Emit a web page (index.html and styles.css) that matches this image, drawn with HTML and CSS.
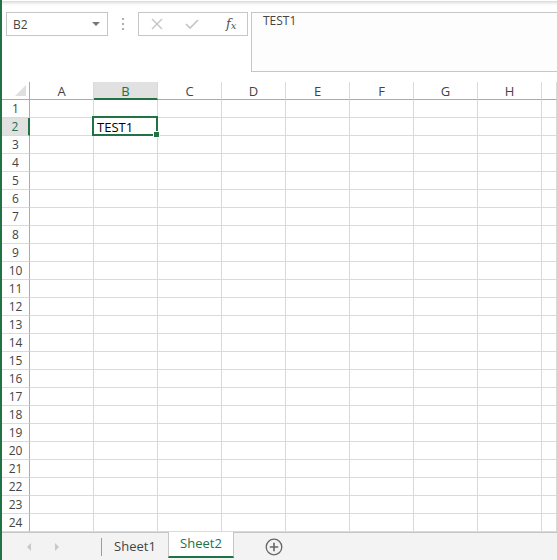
FILE: index.html
```html
<!DOCTYPE html>
<html>
<head>
<meta charset="utf-8">
<link rel="stylesheet" href="styles.css">
</head>
<body>
<div class="app">
  <div class="toolbar">
    <div class="namebox">
      <span class="name">B2</span>
      <span class="caret"></span>
    </div>
    <div class="dots"><i></i><i></i><i></i></div>
    <div class="fbtns">
      <svg class="ico" width="14" height="14" viewBox="0 0 14 14"><path d="M2 2 L12 12 M12 2 L2 12" stroke="#c4c4c4" stroke-width="1.4" fill="none"/></svg>
      <svg class="ico" width="16" height="14" viewBox="0 0 16 14"><path d="M2 7 L6 11 L14 3" stroke="#c4c4c4" stroke-width="1.6" fill="none"/></svg>
      <span class="fx">f<sub>x</sub></span>
    </div>
    <div class="formula">TEST1</div>
  </div>
  <div class="sheet">
    <div class="grid" id="grid"></div>
    <div class="selection"><span class="handle"></span></div>
  </div>
  <div class="tabs">
    <div class="navs">
      <svg width="6" height="8" viewBox="0 0 6 8"><path d="M5 0 L1 4 L5 8 Z" fill="#c8c8c8"/></svg>
      <svg width="6" height="8" viewBox="0 0 6 8"><path d="M1 0 L5 4 L1 8 Z" fill="#c8c8c8"/></svg>
    </div>
    <div class="sep"></div>
    <div class="tab">Sheet1</div>
    <div class="tab active">Sheet2</div>
    <div class="add">
      <svg width="18" height="18" viewBox="0 0 18 18"><circle cx="9" cy="9" r="7.8" stroke="#666" stroke-width="1.3" fill="none"/><path d="M9 4.8 V13.2 M4.8 9 H13.2" stroke="#666" stroke-width="1.6"/></svg>
    </div>
  </div>
</div>
<script src="app.js"></script>
</body>
</html>
```
FILE: app.js
```js
(function(){
  var g = document.getElementById('grid');
  var cols = ['A','B','C','D','E','F','G','H',''];
  var html = '<div class="c corner"><span class="tri"></span></div>';
  cols.forEach(function(c, i){
    html += '<div class="c ch' + (c === 'B' ? ' sel' : '') + '">' + c + '</div>';
  });
  for (var r = 1; r <= 24; r++) {
    html += '<div class="c rh' + (r === 2 ? ' sel' : '') + '">' + r + '</div>';
    for (var k = 0; k < cols.length; k++) {
      var t = (r === 2 && k === 1) ? 'TEST1' : '';
      html += '<div class="c cell">' + t + '</div>';
    }
  }
  g.innerHTML = html;
})();
```
FILE: styles.css
```css
html, body {
  margin: 0;
  padding: 0;
  background: #fff;
}
body {
  font-family: "Open Sans", "Noto Sans", sans-serif;
  color: #444;
  overflow: hidden;
}
.app {
  width: 557px;
  height: 560px;
  border-left: 2px solid #217346;
  box-sizing: border-box;
  display: flex;
  flex-direction: column;
  overflow: hidden;
}
.toolbar {
  height: 82px;
  box-sizing: border-box;
  background: linear-gradient(#ffffff 0px, #ffffff 1px, #d6d6d6 1px, #e4e4e4 2px, #f6f6f6 4px, #ffffff 6px);
  display: flex;
  align-items: flex-start;
  padding-top: 12px;
  padding-left: 4px;
  flex: none;
}
.namebox {
  width: 102px;
  height: 24px;
  box-sizing: border-box;
  border: 1px solid #c6c6c6;
  display: flex;
  align-items: center;
  justify-content: space-between;
  padding: 0 7px 0 6px;
  font-size: 12px;
  color: #444;
}
.caret {
  width: 0;
  height: 0;
  border-left: 4px solid transparent;
  border-right: 4px solid transparent;
  border-top: 4px solid #777;
}
.dots {
  width: 30px;
  height: 24px;
  display: flex;
  flex-direction: column;
  align-items: center;
  justify-content: center;
  gap: 3px;
}
.dots i {
  width: 2px;
  height: 2px;
  background: #b0b0b0;
  display: block;
}
.fbtns {
  width: 110px;
  height: 24px;
  box-sizing: border-box;
  border: 1px solid #c6c6c6;
  display: flex;
  align-items: center;
  padding-left: 11px;
  gap: 20px;
}
.fbtns .ico {
  display: block;
}
.fx {
  font-family: "DejaVu Serif", "Liberation Serif", serif;
  font-style: italic;
  font-size: 13px;
  color: #555;
  margin-left: 6px;
  line-height: 1;
}
.fx sub {
  font-size: 10px;
  vertical-align: -1px;
}
.formula {
  margin-left: 3px;
  flex: 1;
  height: 60px;
  box-sizing: border-box;
  border: 1px solid #c6c6c6;
  border-right: none;
  background: #fdfdfd;
  font-size: 12px;
  color: #444;
  padding: 0 0 0 11px;
  line-height: 16px;
}
.sheet {
  position: relative;
  flex: none;
  height: 450px;
}
.grid {
  display: grid;
  grid-template-columns: 28px repeat(8, 64px) 1fr;
  grid-auto-rows: 18px;
}
.c {
  box-sizing: border-box;
  border-right: 1px solid #d9d9d9;
  border-bottom: 1px solid #dadada;
  font-size: 12px;
  line-height: 17px;
}
.corner {
  background: #fff;
  border-right: 1px solid #ababab;
  border-bottom: 1px solid #ababab;
  position: relative;
}
.tri {
  position: absolute;
  right: 3px;
  bottom: 3px;
  width: 0;
  height: 0;
  border-left: 11px solid transparent;
  border-bottom: 11px solid #dfdfdf;
}
.ch {
  text-align: center;
  font-size: 13px;
  color: #444;
  border-right: 1px solid #dadada;
  border-bottom: 1px solid #ababab;
  line-height: 18px;
}
.ch.sel {
  background: #e1e1e1;
  border-bottom: 2px solid #217346;
  color: #217346;
}
.rh {
  text-align: center;
  color: #444;
  border-right: 1px solid #ababab;
  font-size: 12px;
}
.rh.sel {
  background: #e1e1e1;
  border-right: 2px solid #217346;
  color: #217346;
}
.cell {
  font-family: "Open Sans", "Liberation Sans", sans-serif;
  font-size: 13px;
  color: #000;
  padding-left: 3px;
  line-height: 18px;
}
.selection {
  position: absolute;
  left: 90px;
  top: 34px;
  width: 66px;
  height: 20px;
  box-sizing: border-box;
  border: 2px solid #217346;
}
.handle {
  position: absolute;
  right: -4px;
  bottom: -4px;
  width: 5px;
  height: 5px;
  background: #217346;
  border: 1px solid #fff;
}
.tabs {
  flex: 1;
  background: #f3f3f3;
  border-top: 1px solid #c6c6c6;
  display: flex;
  align-items: stretch;
  font-size: 13px;
}
.navs {
  width: 70px;
  display: flex;
  align-items: center;
  justify-content: flex-start;
  gap: 22px;
  padding-left: 24px;
  box-sizing: border-box;
}
.sep {
  width: 1px;
  background: #9c9c9c;
  margin: 5px 0 4px 29px;
}
.tab {
  width: 66px;
  display: flex;
  align-items: center;
  justify-content: center;
  color: #444;
  box-sizing: border-box;
  padding-bottom: 2px;
}
.tab.active {
  background: #fff;
  color: #217346;
  border-left: 1px solid #c6c6c6;
  border-right: 1px solid #c6c6c6;
  border-bottom: 2px solid #217346;
  margin-top: -1px;
  margin-bottom: 2px;
}
.add {
  display: flex;
  align-items: center;
  margin-left: 31px;
}
```
